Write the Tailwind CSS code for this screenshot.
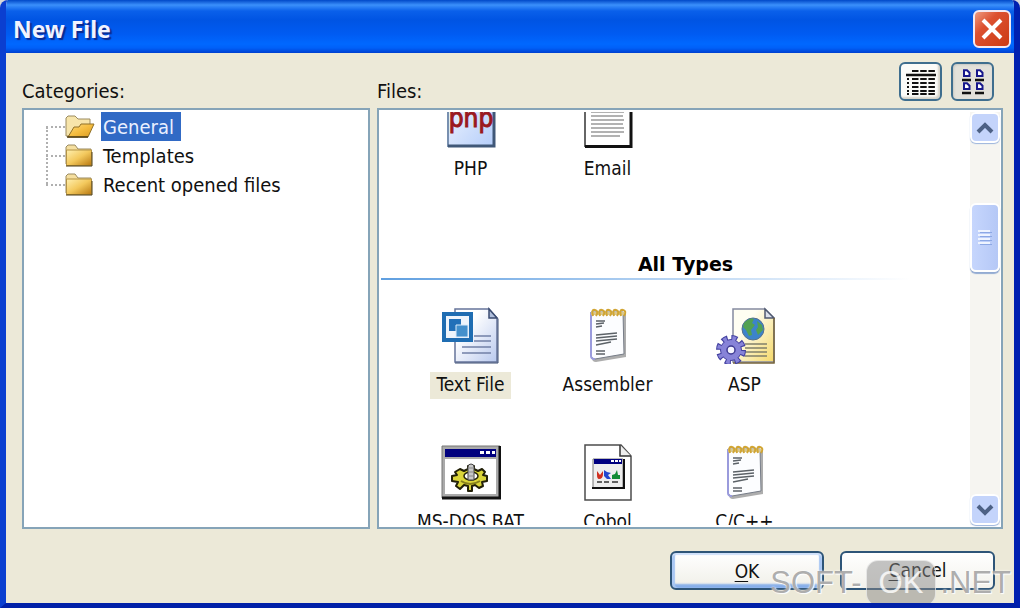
<!DOCTYPE html>
<html lang="en">
<head>
<meta charset="utf-8">
<title>New File</title>
<script src="https://cdn.jsdelivr.net/npm/@tailwindcss/browser@4"></script>
</head>
<body class="bg-[#d8d8d8]">
<div class="relative flex h-screen flex-col overflow-hidden rounded-t-lg border-x-[6px] border-b-[5px] border-l-[#0b3fd0] border-r-[#0020b0] border-b-[#0020a8] bg-[#ece9d8] font-['DejaVu_Sans_Condensed','Noto_Sans',sans-serif] text-[20px] leading-7 text-[#111]">
  <header class="-mx-[6px] flex h-[53px] shrink-0 items-center justify-between bg-[linear-gradient(to_bottom,#0048c8_0px,#3b90fb_5px,#0a60ea_11px,#0054e3_20px,#005bf2_34px,#0068ff_44px,#0060f8_48px,#0040d0_53px)] pt-1 pr-[9px] pl-[13px]">
    <h1 class="font-['Noto_Sans',sans-serif] text-[23px] font-bold text-[#f0f3ff] [text-shadow:2px_2px_1px_#0a2a90]">New File</h1>
    <button aria-label="Close" class="flex size-[38px] items-center justify-center rounded-md border-2 border-[#f4e8f0] bg-[linear-gradient(135deg,#ee9a80,#dc5030_35%,#cc3a14)]">
      <svg class="size-6" viewBox="0 0 24 24" fill="none" stroke="#fff" stroke-width="4"><path d="M3 3 21 21M21 3 3 21"/></svg>
    </button>
  </header>

  <main class="grid min-h-0 flex-1 grid-cols-[348px_1fr] grid-rows-[55px_1fr] gap-x-[7px] pr-[11px] pl-4">
    <h2 id="cat" class="self-end pb-[3px]">Categories:</h2>
    <div class="flex items-end justify-between pr-[9px]">
      <h2 id="files" class="pb-[3px]">Files:</h2>
      <div class="flex gap-[9px] pb-[7px]">
        <button aria-label="Details" class="flex h-[39px] w-[43px] items-center justify-center rounded-md border-2 border-[#3f6e8e] bg-[#fbfbf8] shadow-[inset_-2px_-2px_2px_#d5d2c8]">
          <svg class="h-[26px] w-[30px]" viewBox="0 0 30 26"><g stroke="#111" stroke-width="2"><path d="M6 2h23" stroke-dasharray="6.500 1.700"/><path d="M0 6h30" stroke-width="2.500"/><path d="M1 10h2M1 14h2M1 18h2M1 22h2M1 25h2"/><path d="M6 10h23M6 14h23M6 18h23M6 22h23M6 25h23" stroke-dasharray="6.500 1.700"/></g></svg>
        </button>
        <button aria-label="Icons" class="flex h-[39px] w-[43px] items-center justify-center rounded-md border-2 border-[#3f6e8e] bg-[#e3e1da] shadow-[inset_1px_1px_2px_#c8c8c4]">
          <svg class="h-[26px] w-[22px]" viewBox="0 0 22 26"><defs><g id="mini"><path d="M2 1.200h3l2.500 2.500V7H2Z" fill="#fff" stroke="#17178c" stroke-width="2"/><path d="M0 11h9" stroke="#111" stroke-width="2.500"/></g></defs><use href="#mini"/><use href="#mini" x="13"/><use href="#mini" y="13"/><use href="#mini" x="13" y="13"/></svg>
        </button>
      </div>
    </div>

    <section aria-labelledby="cat" class="border-2 border-[#86a4b8] bg-white pt-[2px] pl-[22px]">
      <svg width="0" height="0" class="absolute">
        <defs>
          <linearGradient id="gold" x2="1" y2="1"><stop stop-color="#fff0b0"/><stop offset=".5" stop-color="#f3c85c"/><stop offset="1" stop-color="#b87810"/></linearGradient>
          <linearGradient id="openGold" x2="1" y2="1"><stop stop-color="#fbdc80"/><stop offset=".5" stop-color="#f5bd40"/><stop offset="1" stop-color="#d99a20"/></linearGradient>
          <linearGradient id="paper" x2="1" y2="1"><stop offset=".3" stop-color="#fff"/><stop offset="1" stop-color="#b9c9ee"/></linearGradient>
          <linearGradient id="cream" x2="1" y2="1"><stop offset=".3" stop-color="#fffef2"/><stop offset="1" stop-color="#f5d868"/></linearGradient>
          <linearGradient id="php" x2="1" y2="1"><stop stop-color="#f4f8ff"/><stop offset="1" stop-color="#b4cdfa"/></linearGradient>
          <symbol id="folder" viewBox="0 0 28 23"><path d="M1 20V3l2-2h7l3 4h13v15Z" fill="#f5dfa0" stroke="#9b8b60"/><path d="M1.500 6H26.500V21.500H1.500Z" fill="url(#gold)" stroke="#b49345"/><path d="M1 22h26V8" fill="none" stroke="#4e3c12"/></symbol>
          <symbol id="notepad" viewBox="0 0 40 57">
            <path d="M5 7h33v43L8 55q-4 0-4-4Z" fill="#777" opacity=".6"/>
            <path d="M3 5h32l1 42-29 5q-4 0-4-4Z" fill="#fcfdff" stroke="#777d88"/><path d="M3 5v44q0 3 4 3" fill="none" stroke="#9a9bdc" stroke-width="2"/>
            <path d="M3 5h33v3H3Z" fill="#d9c88f"/>
            <g fill="none" stroke="#d1a534" stroke-width="2"><path d="M5 9q-2-7 2-6t1 6M12 9q-2-7 2-6t1 6M19 9q-2-7 2-6t1 6M26 9q-2-7 2-6t1 6M33 9q-2-7 2-6t1 6"/></g>
            <g fill="none" stroke="#5c6268" stroke-width="1.300"><path d="M8 14h9M8 17l8-1M8 20l6-1M8 28l21-2M8 31l21-2M8 34l21-2M8 38l15-3M8 44h9M8 47h9"/></g>
          </symbol>
        </defs>
      </svg>
      <ul class="relative before:absolute before:top-[15px] before:bottom-[15px] before:left-0 before:border-l-2 before:border-dotted before:border-[#b0b0b0]">
        <li class="flex h-[29px] items-center"><span class="w-[19px] border-t-2 border-dotted border-[#b0b0b0]"></span>
          <svg class="h-[23px] w-[30px]" viewBox="0 0 30 23"><path d="M1 21V3l2-2h7l3 3h12v6L7 21Z" fill="#f7e5ab" stroke="#9b8b60"/><path d="m3 22 6-10h5l2-3h13l-6 13Z" fill="url(#openGold)" stroke="#8f7028"/><path d="M2 22h21" stroke="#4e3c12" stroke-width="1.500"/></svg>
          <button class="ml-[6px] h-[29px] bg-[#316ac5] pr-[7px] pl-[2px] text-[#eaf0ff]">General</button></li>
        <li class="flex h-[29px] items-center"><span class="w-[19px] border-t-2 border-dotted border-[#b0b0b0]"></span><svg class="h-[23px] w-[30px] pr-[2px]"><use href="#folder"/></svg><button class="ml-[6px] pl-[2px]">Templates</button></li>
        <li class="flex h-[29px] items-center"><span class="w-[19px] border-t-2 border-dotted border-[#b0b0b0]"></span><svg class="h-[23px] w-[30px] pr-[2px]"><use href="#folder"/></svg><button class="ml-[6px] pl-[2px]">Recent opened files</button></li>
      </ul>
    </section>

    <section aria-labelledby="files" class="flex min-h-0 border-2 border-[#86a4b8] bg-white py-[2px] pr-px pl-[2px] text-[19px]">
      <div class="min-w-0 flex-1 overflow-hidden">
        <div class="-mt-[21px]">
          <div class="grid grid-cols-[repeat(3,137px)] pl-[21px]">
            <button class="flex flex-col items-center gap-2">
              <svg class="h-[57px] w-[50px]" viewBox="0 0 50 57"><path d="M2 1h46v54H2Z" fill="url(#php)" stroke="#7890b0" stroke-width="2"/><path d="M2 55h46V1" fill="none" stroke="#405878" stroke-width="3"/><text x="25" y="36" text-anchor="middle" font-family="'Liberation Sans Narrow','DejaVu Sans Condensed',sans-serif" font-size="26" fill="#9a1820" stroke="#9a1820">php</text></svg>
              <span class="h-[27px] leading-6">PHP</span></button>
            <button class="flex flex-col items-center gap-2">
              <svg class="h-[57px] w-[50px]" viewBox="0 0 50 57"><path d="M2 1h46v54H2Z" fill="#fff" stroke="#666" stroke-width="2"/><path d="M2 55.500h46V1" fill="none" stroke="#111" stroke-width="3"/><path d="M8 13h33M8 17h33M8 21h33M8 25h32M8 29h33M8 33h32M8 37h33M8 41h33M8 45h29" stroke="#999" stroke-width="1.500"/></svg>
              <span class="h-[27px] leading-6">Email</span></button>
          </div>
          <h3 class="mt-[67px] ml-[20px] text-center font-['DejaVu_Sans',sans-serif] font-bold text-black">All Types</h3>
          <div class="mr-[60px] h-[2px] bg-linear-to-r from-[#5f9fe0] to-white"></div>
          <div class="mt-[27px] grid grid-cols-[repeat(3,137px)] gap-y-[45px] pl-[21px]">
            <button class="flex flex-col items-center gap-2">
              <svg class="h-[57px] w-[60px]" viewBox="0 0 60 57"><path d="M14 2h34l8 9v44H14Z" fill="url(#paper)" stroke="#66749a" stroke-width="1.500"/><path d="M48 2v9h8Z" fill="#b0bfdc" stroke="#3b4c72" stroke-width="1.500"/><path d="M14 56h43V12" fill="none" stroke="#3b4c72"/><path d="M33 29h17M33 34h17M21 40h29M21 46h29" stroke="#7280a6" stroke-width="1.500"/><path d="M3 7h27v26H3Z" fill="#eef5fc" stroke="#1f6db2" stroke-width="4"/><path d="M8 12h12v12H8Z" fill="#2270b8"/><path d="M15 18h12v12H15Z" fill="#4390cc" stroke="#d9eafa"/></svg>
              <span class="h-[27px] bg-[#ece9d8] px-[6px] leading-6">Text File</span></button>
            <button class="flex flex-col items-center gap-2"><svg class="h-[57px] w-10"><use href="#notepad"/></svg><span class="h-[27px] leading-6">Assembler</span></button>
            <button class="flex flex-col items-center gap-2">
              <svg class="h-[57px] w-[60px]" viewBox="0 0 60 57"><path d="M18 2h32l9 9v44H18Z" fill="url(#cream)" stroke="#858ba0" stroke-width="1.500"/><path d="M50 2v9h9Z" fill="#dce1ec" stroke="#505a70" stroke-width="1.500"/><path d="M18 56h41V11" fill="none" stroke="#77643a" stroke-width="1.500"/><path d="M30 37h22M30 41h22M30 45h22M30 49h22" stroke="#81806a" stroke-width="1.500"/><circle cx="38" cy="22" r="11" fill="#3c83cc" stroke="#56708c"/><path d="M29 16q6-6 10-4l-2 4 3 2-4 5 1 5-3 1-3-6-3-3ZM42 14l5 4 1 5-5 5-2-5 2-3Z" fill="#53a152"/><circle cx="16" cy="43" r="11.500" fill="none" stroke="#4240a0" stroke-width="7" stroke-dasharray="5.500 3.530"/><circle cx="16" cy="43" r="10.500" fill="#8783d8" stroke="#4642a0"/><circle cx="16" cy="43" r="11.500" fill="none" stroke="#8783d8" stroke-width="5" stroke-dasharray="3.500 5.530" stroke-dashoffset="-1"/><circle cx="16" cy="43" r="4" fill="#f6f6ff" stroke="#3e3a92" stroke-width="1.500"/></svg>
              <span class="h-[27px] leading-6">ASP</span></button>
            <button class="flex flex-col items-center gap-2">
              <svg class="h-[57px] w-[60px]" viewBox="0 0 60 57"><path d="M1 2h58v52H1Z" fill="#aaa" stroke="#777"/><path d="M1 54h58V2" fill="none" stroke="#111" stroke-width="3"/><path d="M4 5h51v8H4Z" fill="#00007e"/><path d="M39 7h4v3h-4ZM45 7h4v3h-4ZM51 7h3v3h-3Z" fill="#fff"/><path d="M4 15h51v35H4Z" fill="#fff"/><path d="m19 25 4 2 4-2v-3h6v3l4 2 4-2 3 3-2 3 4 1v5l-5 1 1 4-4 2-4-3-3 1v5h-4v-5l-4-1-4 4-4-3 2-4-6-1v-5l5-1-2-3Z" fill="#dad53a" stroke="#222008" stroke-width="2" stroke-linejoin="round"/><path d="M20 37q9 6 19 0" fill="none" stroke="#87801c" stroke-width="2"/><ellipse cx="30" cy="32" rx="7" ry="4" fill="#fff" stroke="#222008" stroke-width="1.500"/><path d="M27 36V23q0-3 3-3t3 3v13Z" fill="#c8c8c8" stroke="#444"/><path d="M28 24h4M28 28h4M28 32h4" stroke="#888"/></svg>
              <span class="h-[27px] leading-6">MS-DOS BAT</span></button>
            <button class="flex flex-col items-center gap-2">
              <svg class="h-[57px] w-[50px]" viewBox="0 0 50 57"><path d="M2 1h36l10 11v44H2Z" fill="#fff" stroke="#4c4c4c" stroke-width="1.500"/><path d="M37 1v11h11" fill="#eee" stroke="#333" stroke-width="1.500"/><path d="M10 15h30v29H10Z" fill="#eee" stroke="#777"/><path d="M9 44h32V15" fill="none" stroke="#111" stroke-width="2"/><path d="M11 15h28v5H11Z" fill="#000080"/><path d="M28 16h3v2h-3ZM32 16h3v2h-3ZM36 16h2v2h-2Z" fill="#fff"/><path d="M14 27v4q0 4 2 4 4 0 4-5v-3l-3 4Z" fill="#d03020"/><path d="m21 26 3 2 4 1-3 2 3 4h-4l-3-3Z" fill="#2348cf"/><path d="m34 26 1 5h2v4h-8v-4l3-1Z" fill="#118b35"/><path d="M14 38h5M21 38h5M29 38h6" stroke="#333" stroke-width="1.500"/></svg>
              <span class="h-[27px] leading-6">Cobol</span></button>
            <button class="flex flex-col items-center gap-2"><svg class="h-[57px] w-10"><use href="#notepad"/></svg><span class="h-[27px] leading-6">C/C++</span></button>
          </div>
        </div>
      </div>
      <div class="flex w-[30px] shrink-0 flex-col bg-[#f6f5f1]">
        <button aria-label="Scroll up" class="flex h-[31px] items-center justify-center rounded-md border-2 border-white bg-[#c4d4fb] shadow-[0_1px_1px_#9cb4dc]"><svg class="h-3 w-[18px]" viewBox="0 0 18 12" fill="none" stroke="#4d6185" stroke-width="4"><path d="m2 10 7-7 7 7"/></svg></button>
        <div class="flex-[60]"></div>
        <div class="flex h-[69px] items-center justify-center rounded-md border-2 border-white bg-linear-to-r from-[#c6d6fd] to-[#b5c8f6] shadow-[0_2px_1px_#93abd2]"><svg class="h-[15px] w-[14px]" viewBox="0 0 14 15"><path d="M0 1h12M0 5h12M0 9h12M0 13h12" stroke="#eef4ff" stroke-width="2"/><path d="M2 2.500h12M2 6.500h12M2 10.500h12M2 14.500h12" stroke="#8ca8e4"/></svg></div>
        <div class="flex-[222]"></div>
        <button aria-label="Scroll down" class="flex h-[31px] items-center justify-center rounded-md border-2 border-white bg-[#c4d4fb] shadow-[0_1px_1px_#9cb4dc]"><svg class="h-3 w-[18px]" viewBox="0 0 18 12" fill="none" stroke="#4d6185" stroke-width="4"><path d="m2 2 7 7 7-7"/></svg></button>
      </div>
    </section>
  </main>

  <footer class="flex shrink-0 justify-end gap-4 pt-[22px] pr-[19px] pb-[13px] text-[19px]">
    <button class="h-[39px] w-[154px] rounded-md border-2 border-[#2e5578] bg-linear-to-b from-white to-[#f0efe8] shadow-[inset_0_2px_1px_#cfe0fa,inset_3px_0_1px_#a9c7f3,inset_-3px_0_1px_#a9c7f3,inset_0_-4px_2px_#86aeea]"><u class="underline-offset-3">O</u>K</button>
    <button class="h-[39px] w-[155px] rounded-md border-2 border-[#2e5578] bg-linear-to-b from-white to-[#f3f2ec] pb-[2px]"><u class="underline-offset-3">C</u>ancel</button>
  </footer>

  <div class="pointer-events-none absolute right-[3px] -bottom-[3px] flex items-center gap-1 font-['Liberation_Sans',sans-serif] text-[31px] leading-[44px] text-[#8a8a8a]/70 [text-shadow:0_0_2px_#fff,1px_1px_1px_#fff]">
    <span>SOFT-</span><span class="rounded-xl border border-white/60 bg-[#8a8a8a]/50 px-3 text-white/80 [text-shadow:none]">OK</span><span>.NET</span>
  </div>
</div>
</body>
</html>
